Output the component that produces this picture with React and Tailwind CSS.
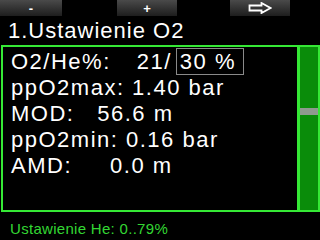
import React from 'react';

const Btn = ({ children, className = '' }) => (
  <div className={`h-4 w-[60px] bg-gradient-to-b from-[#4a4a4a] to-[#1e1e1e] flex items-center justify-center text-white text-[13px] font-bold leading-none ${className}`}>
    {children}
  </div>
);

const Arrow = () => (
  <svg width="24" height="12" viewBox="0 0 24 12">
    <path d="M1.5 3.5h12v-2.5l9 5l-9 5v-2.5h-12z" fill="none" stroke="#fff" strokeWidth="1.8" strokeLinejoin="miter" />
  </svg>
);

export default function App() {
  const rows = [
    'ppO2max: 1.40 bar',
    'MOD:   56.6 m',
    'ppO2min: 0.16 bar',
    'AMD:     0.0 m',
  ];

  return (
    <div className="w-[320px] h-[240px] bg-black overflow-hidden flex flex-col" style={{ fontFamily: '"Liberation Sans", Arial, sans-serif' }}>
      <div className="flex h-4 shrink-0">
        <Btn className="w-[62px]">-</Btn>
        <Btn className="ml-[55px]">+</Btn>
        <Btn className="ml-[53px]"><Arrow /></Btn>
      </div>

      <div className="h-[29px] shrink-0 pl-2 text-white text-[22px] leading-[29px] tracking-[1px]">1.Ustawienie O2</div>

      <div className="ml-px h-[167px] shrink-0 border-2 border-[#35e835] flex">
        <div className="flex-1 pl-2 pt-px text-white text-[22px] leading-[26px] tracking-[1.5px] whitespace-pre">
          <div className="flex items-center">
            <span>O2/He%:</span>
            <span className="ml-[26px]">21/</span>
            <span className="ml-[4px] border border-[#8a8a8a] pl-[3px] pr-[7px] leading-[25px]">30 %</span>
          </div>
          {rows.map((r) => (
            <div key={r}>{r}</div>
          ))}
        </div>
        <div className="w-[21px] border-l-[3px] border-[#35e835] bg-[#0a8c0a] flex flex-col">
          <div className="h-[61px]" />
          <div className="h-[7px] bg-[#8f9a8f]" />
        </div>
      </div>

      <div className="pl-[10px] pt-[7px] text-[#33d633] text-[15px] leading-5 tracking-[0.3px]">Ustawienie He: 0..79%</div>
    </div>
  );
}
